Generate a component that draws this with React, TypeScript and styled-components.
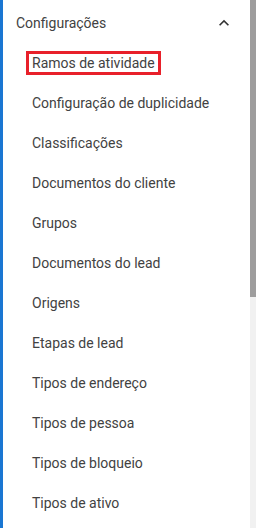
import React from "react";
import styled, { createGlobalStyle } from "styled-components";

const GlobalStyle = createGlobalStyle`
	html, body {
		margin: 0;
		padding: 0;
		background: #ffffff;
	}
	body {
		font-family: Roboto, "Noto Sans", Arial, sans-serif;
	}
`;

const StyledPage = styled.div`
	display: flex;
	width: 256px;
	height: 528px;
	overflow: hidden;
	background-color: #ffffff;
`;

const StyledAccent = styled.div`
	width: 3px;
	flex-shrink: 0;
	background-color: #1a76d2;
`;

const StyledMenu = styled.nav`
	flex: 1;
	display: flex;
	flex-direction: column;
	padding-top: 3px;
`;

const StyledHeader = styled.div`
	display: flex;
	align-items: center;
	justify-content: space-between;
	height: 40px;
	padding: 0 16px 0 13px;
	font-size: 14px;
	color: #424242;
`;

const StyledItem = styled.div`
	display: flex;
	align-items: center;
	height: 40px;
	padding-left: 29px;
	font-size: 14px;
	color: #424242;
	white-space: nowrap;
`;

const StyledLabel = styled.span<{ $highlighted?: boolean }>`
	border: ${(p) => (p.$highlighted ? "3px solid #e8202a" : "none")};
	padding: ${(p) => (p.$highlighted ? "1px 3px" : "0")};
	margin-left: ${(p) => (p.$highlighted ? "-6px" : "0")};
`;

const StyledScrollbar = styled.div`
	width: 6px;
	flex-shrink: 0;
	display: flex;
	flex-direction: column;
	background-color: #f1f1f1;
`;

const StyledThumb = styled.div`
	height: 297px;
	background-color: #9e9d9d;
`;

const items = [
	"Ramos de atividade",
	"Configuração de duplicidade",
	"Classificações",
	"Documentos do cliente",
	"Grupos",
	"Documentos do lead",
	"Origens",
	"Etapas de lead",
	"Tipos de endereço",
	"Tipos de pessoa",
	"Tipos de bloqueio",
	"Tipos de ativo",
];

const App: React.FC = () => {
	return (
		<>
			<GlobalStyle />
			<StyledPage>
				<StyledAccent />
				<StyledMenu>
					<StyledHeader>
						<span>Configurações</span>
						<svg width="20" height="20" viewBox="0 0 24 24" fill="#333">
							<path d="M12 8l-6 6 1.41 1.41L12 10.83l4.59 4.58L18 14z" />
						</svg>
					</StyledHeader>
					{items.map((item, i) => (
						<StyledItem key={item}>
							<StyledLabel $highlighted={i === 0}>{item}</StyledLabel>
						</StyledItem>
					))}
				</StyledMenu>
				<StyledScrollbar>
					<StyledThumb />
				</StyledScrollbar>
			</StyledPage>
		</>
	);
};

export default App;
